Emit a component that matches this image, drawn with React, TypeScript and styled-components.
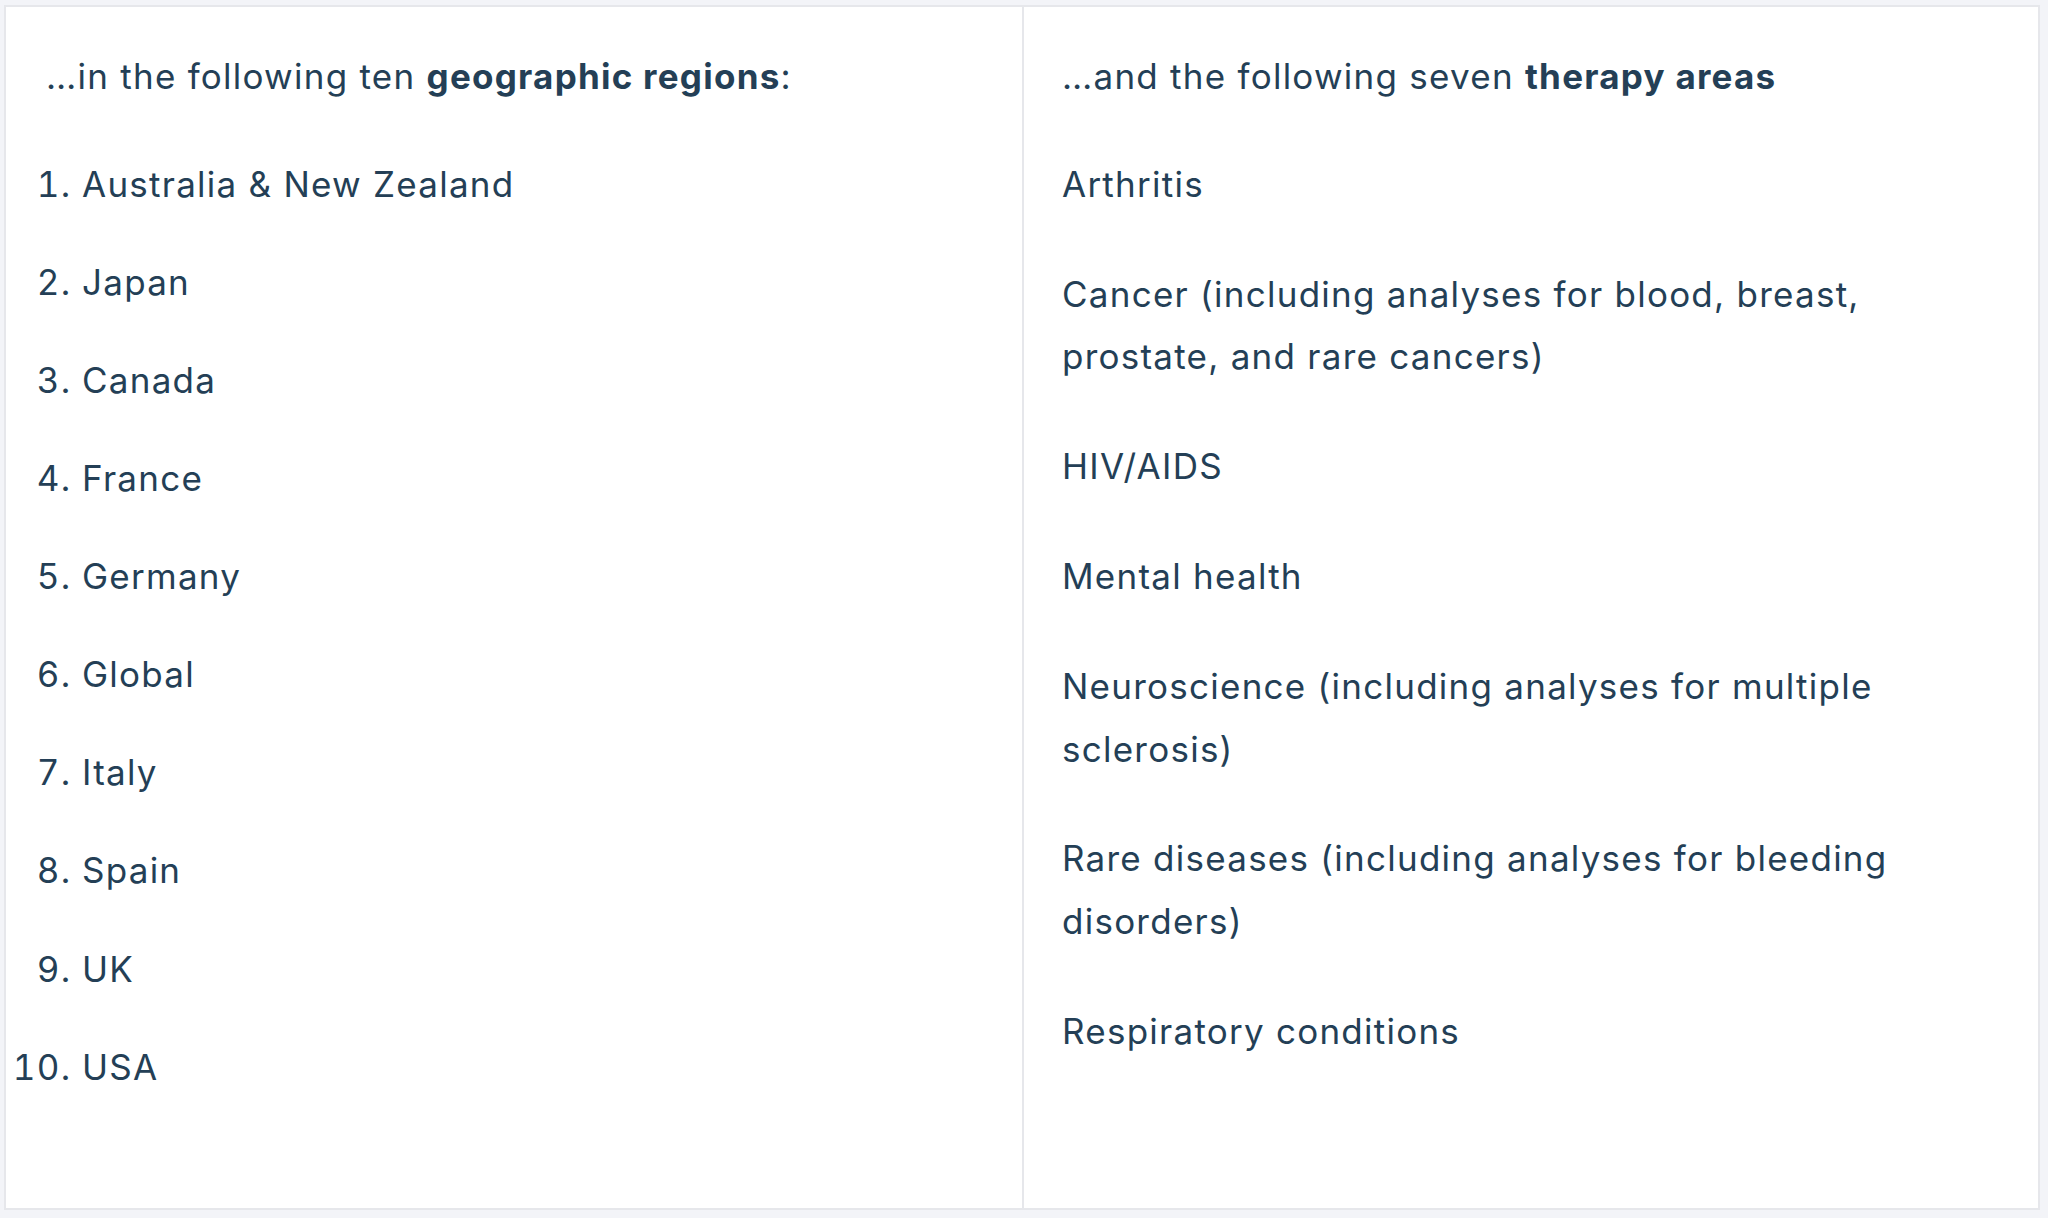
import React from "react";
import styled, { createGlobalStyle } from "styled-components";

const GlobalStyle = createGlobalStyle`
  html, body {
    margin: 0;
    padding: 0;
    background: #f3f4f8;
  }
  body {
    font-family: Inter, "Open Sans", "Noto Sans", sans-serif;
    color: #243f56;
  }
`;

const Page = styled.div`
  box-sizing: border-box;
  height: 100vh;
  padding: 5px 8px 8px 4px;
  display: flex;
`;

const Card = styled.div`
  flex: 1;
  display: grid;
  grid-template-columns: 1fr 1fr;
  background: #ffffff;
  border: 2px solid #e6e7eb;
`;

const Column = styled.section<{ $divider?: boolean }>`
  padding: 38px 40px 38px ${(p) => (p.$divider ? "38px" : "40px")};
  border-left: ${(p) => (p.$divider ? "2px solid #e6e7eb" : "none")};
  font-size: 35px;
  line-height: 62.8px;
  letter-spacing: 1.25px;
`;

const Heading = styled.p`
  margin: 0 0 45px;
  font-weight: 400;
  strong {
    font-weight: 700;
  }
`;

const NumberedList = styled.ol`
  margin: 0;
  padding-left: 36px;
`;

const Item = styled.li`
  margin-bottom: 35.3px;
`;

const Area = styled.p`
  margin: 0 0 47px;
  max-width: 880px;
`;

const regions = [
  "Australia & New Zealand",
  "Japan",
  "Canada",
  "France",
  "Germany",
  "Global",
  "Italy",
  "Spain",
  "UK",
  "USA",
];

const areas = [
  "Arthritis",
  "Cancer (including analyses for blood, breast, prostate, and rare cancers)",
  "HIV/AIDS",
  "Mental health",
  "Neuroscience (including analyses for multiple sclerosis)",
  "Rare diseases (including analyses for bleeding disorders)",
  "Respiratory conditions",
];

export default function App() {
  return (
    <>
      <GlobalStyle />
      <Page>
        <Card>
          <Column>
            <Heading>
              …in the following ten <strong>geographic regions</strong>:
            </Heading>
            <NumberedList>
              {regions.map((r) => (
                <Item key={r}>{r}</Item>
              ))}
            </NumberedList>
          </Column>
          <Column $divider>
            <Heading>
              …and the following seven <strong>therapy areas</strong>
            </Heading>
            {areas.map((a) => (
              <Area key={a}>{a}</Area>
            ))}
          </Column>
        </Card>
      </Page>
    </>
  );
}
